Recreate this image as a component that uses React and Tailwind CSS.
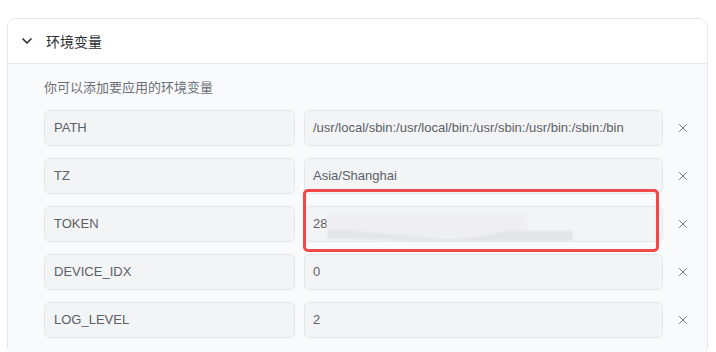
import { ChevronDown, X } from "lucide-react";

const envVars = [
  { key: "PATH", value: "/usr/local/sbin:/usr/local/bin:/usr/sbin:/usr/bin:/sbin:/bin" },
  { key: "TZ", value: "Asia/Shanghai" },
  { key: "TOKEN", value: "28", masked: true },
  { key: "DEVICE_IDX", value: "0" },
  { key: "LOG_LEVEL", value: "2" },
];

// smudge drawn over the token value
function Smudge() {
  return (
    <svg className="absolute left-[20px] top-[4px]" width="250" height="32" viewBox="0 0 250 32">
      <defs>
        <filter id="soft" x="-10%" y="-30%" width="120%" height="160%">
          <feGaussianBlur stdDeviation="1.2" />
        </filter>
      </defs>
      <rect x="2" y="2" width="200" height="24" fill="#efeff1" filter="url(#soft)" />
      <path
        d="M3 18 C 40 20, 70 24, 110 27 C 140 29, 160 25, 180 20 L 248 20 L 248 30 L 170 30 C 150 30, 120 31, 90 30 C 50 29, 20 28, 3 28 Z"
        fill="#e4e5e7"
        filter="url(#soft)"
      />
    </svg>
  );
}

function EnvRow({ item }) {
  return (
    <div className="flex items-center h-[36px]">
      <div className="w-[251px] h-full flex items-center px-[9px] bg-[#f3f4f6] border border-[#e3e5e8] rounded-[6px] text-[13px] text-[#5c6066]">
        {item.key}
      </div>
      <div className="relative ml-[9px] w-[359px] h-full flex items-center px-[8px] bg-[#f3f4f6] border border-[#e3e5e8] rounded-[6px] text-[13px] text-[#5c6066]">
        {item.value}
        {item.masked && (
          <>
            <Smudge />
            <div className="absolute left-[-2px] top-[-18px] w-[356px] h-[63px] border-[3px] border-[#f0494b] rounded-[5px]"></div>
          </>
        )}
      </div>
      <div className="flex-1 flex justify-center pr-[4px]">
        <X size={14} strokeWidth={1.6} className="text-[#6b7077]" />
      </div>
    </div>
  );
}

export default function App() {
  return (
    <div
      className="w-[716px] h-[352px] overflow-hidden bg-white pt-[18px] pl-[7px] pr-[8px]"
      style={{ fontFamily: '"Liberation Sans", Arial, "Noto Sans CJK SC", sans-serif' }}
    >
      <div className="border border-[#e5e7eb] rounded-[9px] overflow-hidden">
        <div className="h-[45px] flex items-center bg-white border-b border-[#e5e7eb]">
          <ChevronDown size={16} strokeWidth={2.6} className="ml-[11px] text-[#2d3136]" />
          <span className="ml-[11px] text-[14px] text-[#2b2f33]" style={{ fontFamily: '"Noto Sans CJK SC", sans-serif' }}>
            环境变量
          </span>
        </div>
        <div className="bg-[#f9fafb] pl-[36px] pt-[13px] pb-[16px]">
          <div className="h-[20px] flex items-center text-[13px] text-[#6b7078]" style={{ fontFamily: '"Noto Sans CJK SC", sans-serif' }}>
            你可以添加要应用的环境变量
          </div>
          <div className="mt-[13px] flex flex-col gap-[12px]">
            {envVars.map((item) => (
              <EnvRow key={item.key} item={item} />
            ))}
          </div>
        </div>
      </div>
    </div>
  );
}
